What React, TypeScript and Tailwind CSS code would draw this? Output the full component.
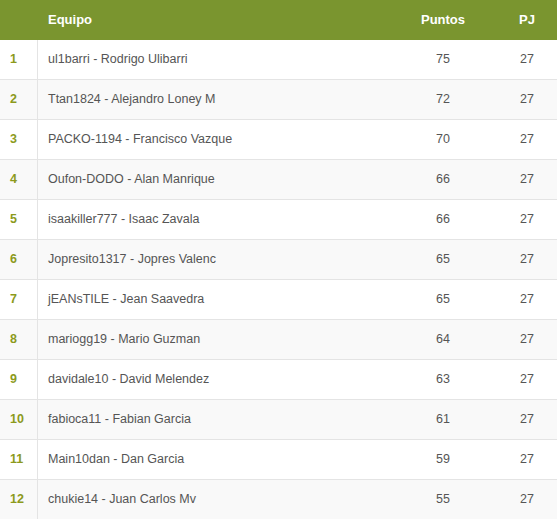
const rows = [
  { team: "ul1barri - Rodrigo Ulibarri", pts: 75, pj: 27 },
  { team: "Ttan1824 - Alejandro Loney M", pts: 72, pj: 27 },
  { team: "PACKO-1194 - Francisco Vazque", pts: 70, pj: 27 },
  { team: "Oufon-DODO - Alan Manrique", pts: 66, pj: 27 },
  { team: "isaakiller777 - Isaac Zavala", pts: 66, pj: 27 },
  { team: "Jopresito1317 - Jopres Valenc", pts: 65, pj: 27 },
  { team: "jEANsTILE - Jean Saavedra", pts: 65, pj: 27 },
  { team: "mariogg19 - Mario Guzman", pts: 64, pj: 27 },
  { team: "davidale10 - David Melendez", pts: 63, pj: 27 },
  { team: "fabioca11 - Fabian Garcia", pts: 61, pj: 27 },
  { team: "Main10dan - Dan Garcia", pts: 59, pj: 27 },
  { team: "chukie14 - Juan Carlos Mv", pts: 55, pj: 27 },
];

export default function App() {
  return (
    <div className="w-[557px] bg-white font-['Liberation_Sans',Arial,sans-serif] text-[12.5px]">
      <div className="grid h-[40px] grid-cols-[38px_1fr_92px_68px] items-center bg-[#7a952f] text-[13px] font-bold text-white">
        <div />
        <div className="pl-[10px]">Equipo</div>
        <div className="text-center">Puntos</div>
        <div className="pl-2 text-center">PJ</div>
      </div>

      {rows.map((r, i) => (
        <div
          key={r.team}
          className={`grid h-[40px] grid-cols-[38px_1fr_92px_68px] items-center border-b border-[#e4e4e4] text-[#555] ${
            i % 2 === 1 ? "bg-[#f9f9f9]" : "bg-white"
          }`}
        >
          <div className="flex h-full items-center border-r border-[#e4e4e4] pl-[10px] font-bold text-[#8c9a1c]">
            {i + 1}
          </div>
          <div className="pl-[10px]">{r.team}</div>
          <div className="text-center">{r.pts}</div>
          <div className="pl-2 text-center">{r.pj}</div>
        </div>
      ))}
    </div>
  );
}
